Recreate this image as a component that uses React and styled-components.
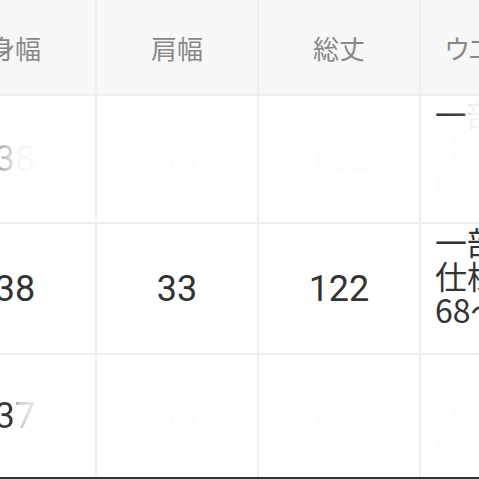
import React from "react";
import styled, { createGlobalStyle, css } from "styled-components";

const Global = createGlobalStyle`
  html, body { margin: 0; padding: 0; background: #ffffff; overflow: hidden; }
  body { font-family: Roboto, "Noto Sans CJK JP", sans-serif; }
`;

const Frame = styled.div`
  width: 479px;
  height: 479px;
  overflow: hidden;
  display: flex;
  flex-direction: column;
  background: #ffffff;
`;

const Table = styled.div`
  margin-left: -65px;
  display: grid;
  grid-template-columns: 160px 160px 160px 160px;
  grid-template-rows: 94px 126px 129px 122px;
  column-gap: 2px;
  row-gap: 2px;
  background: #efefef;
  width: max-content;
`;

const HeadCell = styled.div`
  background: #f7f7f7;
  display: flex;
  align-items: center;
  justify-content: center;
  padding-right: ${(p) => (p.$prop ? 20 : 0)}px;
  font-size: 26px;
  color: #888888;
  font-family: "Noto Sans CJK JP", sans-serif;
  font-feature-settings: "palt" ${(p) => (p.$prop ? 1 : 0)};
  white-space: nowrap;
`;

const Cell = styled.div`
  background: #ffffff;
  display: flex;
  align-items: center;
  justify-content: center;
  font-size: 36px;
  color: #333333;
  font-family: Roboto, "Noto Sans CJK JP", sans-serif;
  white-space: nowrap;
`;

const NoteCell = styled.div`
  background: #ffffff;
  display: flex;
  flex-direction: column;
  align-items: flex-start;
  padding-left: 14px;
  font-size: 32px;
  line-height: 34px;
  color: #333333;
  font-family: "Noto Sans CJK JP", Roboto, sans-serif;
  white-space: nowrap;
`;

const toneStyles = {
  solid: css`color: #333333;`,
  fade: css`
    background: linear-gradient(90deg, #a0a0a0 0%, #c8c8c8 30%, #f4f4f4 55%, #fbfbfb 100%);
    -webkit-background-clip: text;
    background-clip: text;
    color: transparent;
  `,
  fadeDark: css`
    background: linear-gradient(90deg, #333333 0%, #3a3a3a 45%, #cfcfcf 60%, #e8e8e8 100%);
    -webkit-background-clip: text;
    background-clip: text;
    color: transparent;
  `,
  lead: css`
    background: linear-gradient(90deg, #333333 0%, #444444 22%, #f2f2f2 28%, #fdfdfd 100%);
    -webkit-background-clip: text;
    background-clip: text;
    color: transparent;
  `,
  ghost: css`color: #fdfdfd;`,
};

const Text = styled.span`
  ${(p) => toneStyles[p.$tone || "solid"]}
`;

const Line = styled.span`
  display: block;
  ${(p) => toneStyles[p.$tone || "solid"]}
`;

const DarkRule = styled.div`
  height: 2px;
  background: #333333;
`;

const headers = [
  ["身幅", false],
  ["肩幅", false],
  ["総丈", false],
  ["ウエスト", true],
];

const rows = [
  { cells: [["38", "fade"], ["33", "ghost"], ["122", "ghost"]], note: ["lead", "ghost", "ghost"] },
  { cells: [["38", "solid"], ["33", "solid"], ["122", "solid"]], note: ["solid", "solid", "solid"] },
  { cells: [["37", "fadeDark"], ["33", "ghost"], ["122", "ghost"]], note: ["ghost", "ghost", "ghost"] },
];

const noteLines = ["一部ゴム", "仕様ウエスト", "68〜90"];

export default function App() {
  return (
    <>
      <Global />
      <Frame>
        <Table>
          {headers.map(([h, prop]) => (
            <HeadCell key={h} $prop={prop}>{h}</HeadCell>
          ))}
          {rows.map((r, i) => (
            <React.Fragment key={i}>
              {r.cells.map(([v, tone], j) => (
                <Cell key={j}>
                  <Text $tone={tone}>{v}</Text>
                </Cell>
              ))}
              <NoteCell>
                {noteLines.map((l, k) => (
                  <Line key={k} $tone={r.note[k]}>{l}</Line>
                ))}
              </NoteCell>
            </React.Fragment>
          ))}
        </Table>
        <DarkRule />
      </Frame>
    </>
  );
}
